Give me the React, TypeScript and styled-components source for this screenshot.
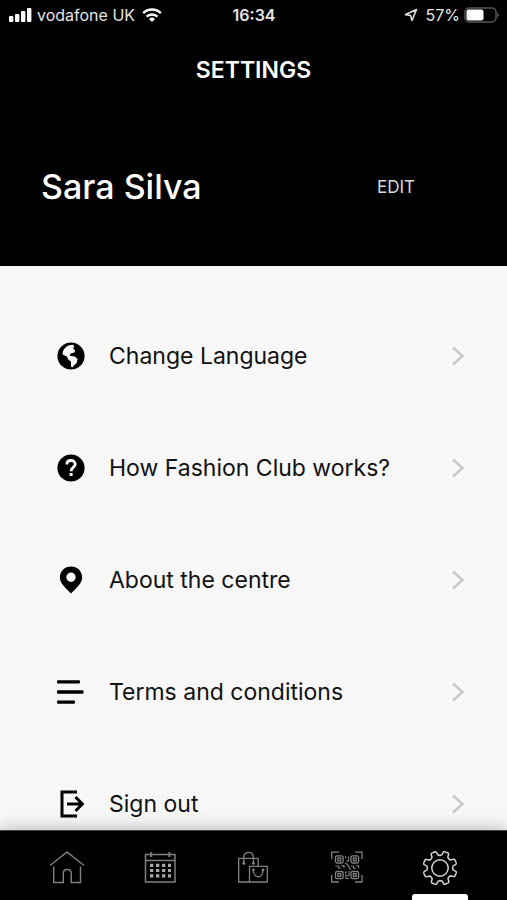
import React from "react";
import styled, { createGlobalStyle } from "styled-components";

const GlobalStyle = createGlobalStyle`
  * { box-sizing: border-box; }
  body {
    margin: 0;
    background: #000;
    font-family: Inter, "Liberation Sans", sans-serif;
  }
  button { font: inherit; border: 0; background: none; cursor: pointer; }
  a { text-decoration: none; color: inherit; }
  svg { display: block; flex: none; }
`;

const Screen = styled.div`
  display: flex;
  flex-direction: column;
  height: 100vh;
  background: #f7f7f7;
`;

const Header = styled.header`
  flex: none;
  background: #000;
  color: #fff;
`;

const StatusBar = styled.div`
  display: grid;
  grid-template-columns: 1fr auto 1fr;
  align-items: center;
  height: 30px;
  padding: 0 7px 0 8px;
  font-size: 16px;
  color: #e4e4e4;
`;

const StatusGroup = styled.div<{ $end?: boolean }>`
  display: flex;
  align-items: center;
  gap: ${(p) => (p.$end ? 4 : 5)}px;
  justify-content: ${(p) => (p.$end ? "flex-end" : "flex-start")};
  white-space: nowrap;
`;

const Carrier = styled.span`
  margin-right: 2px;
`;

const Percent = styled.span`
  margin-left: 4px;
`;

const Clock = styled.time`
  font-weight: 600;
`;

const Title = styled.h1`
  margin: 0;
  padding: 26px 0;
  font-size: 23px;
  line-height: 28px;
  font-weight: 600;
  text-align: center;
`;

const Profile = styled.div`
  display: flex;
  align-items: center;
  justify-content: space-between;
  height: 156px;
  padding: 0 92px 2px 41px;
`;

const Name = styled.h2`
  margin: 0;
  font-size: 34px;
  line-height: 40px;
  font-weight: 500;
`;

const EditButton = styled.button`
  padding: 0;
  font-size: 17px;
  color: #d8d8d8;
`;

const Menu = styled.main`
  flex: 1;
  min-height: 0;
  padding-top: 34px;
  overflow-y: auto;
  scrollbar-width: none;
`;

const MenuRow = styled.button`
  display: flex;
  align-items: center;
  gap: 23px;
  width: 100%;
  height: 112px;
  padding: 0 42px 0 56px;
  color: #111;
  text-align: left;
`;

const RowLabel = styled.span`
  flex: 1;
  font-size: 23px;
  line-height: 30px;
`;

const TabBar = styled.nav`
  position: relative;
  flex: none;
  display: grid;
  grid-template-columns: repeat(5, 1fr);
  height: 70px;
  padding: 0 20px;
  background: #000;
  border-top: 1px solid #444;
  box-shadow: 0 0 16px rgba(0, 0, 0, 0.3);
`;

const Tab = styled.a<{ $active?: boolean }>`
  display: flex;
  flex-direction: column;
  align-items: center;
  justify-content: space-between;
  padding-top: 19px;
  && { color: ${(p) => (p.$active ? "#d2d2d2" : "#808080")}; }
`;

const ActiveMark = styled.span`
  width: 56px;
  height: 6px;
  border-radius: 3px 3px 0 0;
  background: #fff;
`;

const SignalIcon = () => (
  <svg width="24" height="16" viewBox="0 0 24 16" fill="#fff" aria-hidden="true">
    <rect x="1" y="9" width="4.4" height="6" rx="1" />
    <rect x="7" y="7" width="4.4" height="8" rx="1" />
    <rect x="13" y="4" width="4.4" height="11" rx="1" />
    <rect x="19" y="1" width="4.4" height="14" rx="1" />
  </svg>
);

const WifiIcon = () => (
  <svg width="20" height="16" viewBox="0 0 20 16" fill="none" stroke="#fff" strokeWidth="2.5" aria-hidden="true">
    <path d="M1.2 6.1A12.6 12.6 0 0 1 18.8 6.1" />
    <path d="M4.5 9.6A8 8 0 0 1 15.5 9.6" />
    <path d="M10 15L7 12A4.3 4.3 0 0 1 13 12Z" fill="#fff" stroke="none" />
  </svg>
);

const LocationIcon = () => (
  <svg width="14" height="14" viewBox="0 0 14 14" fill="none" stroke="#ddd" strokeWidth="1.6" strokeLinejoin="round" aria-hidden="true">
    <path d="M12.5 1.5L1.5 6.6L6.6 7.5L8 12.5Z" />
  </svg>
);

const BatteryIcon = () => (
  <svg width="36" height="16" viewBox="0 0 36 16" aria-hidden="true">
    <rect x="1" y="1" width="31" height="14" rx="4" fill="none" stroke="#555" strokeWidth="1.5" />
    <rect x="2.5" y="2.5" width="17" height="11" rx="2" fill="#fff" />
    <path d="M33.5 5.5Q36 8 33.5 10.5Z" fill="#777" />
  </svg>
);

const GlobeIcon = () => (
  <svg width="30" height="30" viewBox="0 0 30 30" aria-hidden="true">
    <circle cx="15" cy="15" r="13.6" fill="#000" />
    <path
      d="M6.6 13.4C6.4 8 10.5 3.9 17 3.7L18.2 5L17.2 7.9L19.2 9.3L18.4 11.6L14.6 12.4L13.8 14.8L18.6 15.4L21.6 18L20.6 22L18 24.6L16.2 26.6L15 25.4V20.8L12 18.2L11 15.6Z"
      fill="#f7f7f7"
    />
  </svg>
);

const HelpIcon = () => (
  <svg width="30" height="30" viewBox="0 0 30 30" fill="none" aria-hidden="true">
    <circle cx="15" cy="15" r="13.6" fill="#000" />
    <path d="M10.8 11.5C10.8 8.9 12.6 7.5 15 7.5C17.4 7.5 19.2 9 19.2 11.3C19.2 14 15.2 14.4 15.2 18.2" stroke="#f7f7f7" strokeWidth="2.8" />
    <rect x="13.6" y="20" width="3" height="3" fill="#f7f7f7" />
  </svg>
);

const PinIcon = () => (
  <svg width="30" height="30" viewBox="0 0 30 30" aria-hidden="true">
    <path
      fillRule="evenodd"
      d="M15 1.4C8.7 1.4 3.9 6.1 3.9 12.2C3.9 18.2 9 22.2 15 28.4C21 22.2 26.1 18.2 26.1 12.2C26.1 6.1 21.3 1.4 15 1.4ZM15 7.6A4.7 4.7 0 1 1 15 17A4.7 4.7 0 1 1 15 7.6Z"
    />
  </svg>
);

const LinesIcon = () => (
  <svg width="30" height="30" viewBox="0 0 30 30" aria-hidden="true">
    <rect x="1" y="3.2" width="23" height="3.4" rx="1" />
    <rect x="1" y="13.3" width="26.5" height="3.4" rx="1" />
    <rect x="1" y="23.4" width="18" height="3.4" rx="1" />
  </svg>
);

const SignOutIcon = () => (
  <svg width="30" height="30" viewBox="0 0 30 30" fill="none" stroke="#000" strokeWidth="3" aria-hidden="true">
    <path d="M21 3H6V27H21" />
    <path d="M11 15H26M19.5 8L26.3 15L19.5 22" />
  </svg>
);

const ChevronIcon = () => (
  <svg width="14" height="20" viewBox="0 0 14 20" fill="none" stroke="#c8c8c8" strokeWidth="2.6" aria-hidden="true">
    <path d="M2 1.5L11.5 10L2 18.5" />
  </svg>
);

const HomeIcon = () => (
  <svg width="36" height="36" viewBox="0 0 36 36" fill="none" stroke="currentColor" strokeWidth="1.4" aria-hidden="true">
    <path d="M1 15.5L18 2L35 15.5" />
    <path d="M4.7 16.5V32.5H14.3V23.7C14.3 18 22.3 18 22.3 23.7V32.5H31.5V16.5" />
  </svg>
);

const CalendarIcon = () => (
  <svg width="36" height="36" viewBox="0 0 36 36" fill="none" stroke="currentColor" strokeWidth="1.5" aria-hidden="true">
    <path d="M8.2 4.5H3.5V32H33V4.5H28.4M10.2 4.5H26.4M3.5 10.5H33" />
    <path d="M9.2 2.2V7M27.4 2.2V7" strokeWidth="2.2" />
    {[15.3, 20.5, 25.9].map((y) => (
      <path key={y} d={`M8 ${y}H29`} stroke="#a8a8a8" strokeWidth="3.2" strokeDasharray="3.3 2.7" />
    ))}
  </svg>
);

const BagsIcon = () => (
  <svg width="36" height="36" viewBox="0 0 36 36" fill="none" stroke="currentColor" strokeWidth="1.3" aria-hidden="true">
    <path d="M14.5 32H3.7V8.3H23.2V16" />
    <path d="M14.5 16.3H32.3V32H14.5Z" />
    <path d="M8.8 13V7.3C8.8 .6 18.4 .6 18.4 7.3V13" />
    <path d="M18.4 20C18.4 29 28 29 28 20" />
    <g fill="currentColor" stroke="none">
      <circle cx="8.8" cy="13.2" r="1.5" />
      <circle cx="18.4" cy="13.2" r="1.5" />
      <circle cx="18.4" cy="20" r="1.4" />
      <circle cx="28" cy="20" r="1.4" />
    </g>
  </svg>
);

const QrIcon = () => (
  <svg width="36" height="36" viewBox="0 0 36 36" fill="none" stroke="currentColor" strokeWidth="1.3" aria-hidden="true">
    <path d="M2.7 9V2.2H10M26 2.2H33V9M33 25V32H26M10 32H2.7V25" />
    {[[6.5, 5.8], [22, 5.8], [6.5, 21.5], [22, 21.5]].map(([x, y]) => (
      <g key={`${x}-${y}`}>
        <rect x={x} y={y} width="7.6" height="7.2" rx="1.5" />
        <rect x={x + 2.4} y={y + 2.2} width="2.8" height="2.8" />
      </g>
    ))}
    <g strokeWidth="1.1">
      <path d="M16.6 6V8.5M17 11H19.6V6.5M16 13L18.6 14.5L21.6 20" />
      <path d="M6.5 16H9.5V18H12M12.2 15.6H15V18.2M22 16.2H24.5V18.2H27M27 15.8H29.6V18.5" />
      <path d="M16.6 24.5V22H18M20 21V25.5H17V28.5H20" />
    </g>
  </svg>
);

const gearPath = Array.from({ length: 8 }, (_, i) => {
  const point = (radius: number, degrees: number) => {
    const angle = ((i * 45 + 22 + degrees) * Math.PI) / 180;
    return `${(18 + radius * Math.cos(angle)).toFixed(2)} ${(18 + radius * Math.sin(angle)).toFixed(2)}`;
  };
  return `${i ? "L" : "M"}${point(13.2, -14)}L${point(16.3, -10)}Q${point(17, -8)} ${point(17, -6)}L${point(17, 6)}Q${point(17, 8)} ${point(16.3, 10)}L${point(13.2, 14)}Q${point(12.2, 22)} ${point(13.2, 31)}`;
}).join("");

const GearIcon = () => (
  <svg width="36" height="36" viewBox="0 0 36 36" fill="none" stroke="currentColor" strokeWidth="1.5" strokeLinejoin="round" aria-hidden="true">
    <path d={`${gearPath}Z`} />
    <circle cx="18" cy="18" r="8.2" />
  </svg>
);

const menuItems = [
  { label: "Change Language", Icon: GlobeIcon },
  { label: "How Fashion Club works?", Icon: HelpIcon },
  { label: "About the centre", Icon: PinIcon },
  { label: "Terms and conditions", Icon: LinesIcon },
  { label: "Sign out", Icon: SignOutIcon },
];

const tabs = [
  { label: "Home", Icon: HomeIcon },
  { label: "Calendar", Icon: CalendarIcon },
  { label: "Shops", Icon: BagsIcon },
  { label: "Scan code", Icon: QrIcon },
  { label: "Settings", Icon: GearIcon, active: true },
];

export default function App() {
  return (
    <>
      <GlobalStyle />
      <Screen>
        <Header>
          <StatusBar>
            <StatusGroup>
              <SignalIcon />
              <Carrier>vodafone UK</Carrier>
              <WifiIcon />
            </StatusGroup>
            <Clock>16:34</Clock>
            <StatusGroup $end>
              <LocationIcon />
              <Percent>57%</Percent>
              <BatteryIcon />
            </StatusGroup>
          </StatusBar>
          <Title>SETTINGS</Title>
          <Profile>
            <Name>Sara Silva</Name>
            <EditButton type="button">EDIT</EditButton>
          </Profile>
        </Header>
        <Menu>
          {menuItems.map(({ label, Icon }) => (
            <MenuRow key={label} type="button">
              <Icon />
              <RowLabel>{label}</RowLabel>
              <ChevronIcon />
            </MenuRow>
          ))}
        </Menu>
        <TabBar aria-label="Main">
          {tabs.map(({ label, Icon, active }) => (
            <Tab key={label} href="#" $active={active} aria-label={label} aria-current={active ? "page" : undefined}>
              <Icon />
              {active && <ActiveMark />}
            </Tab>
          ))}
        </TabBar>
      </Screen>
    </>
  );
}
